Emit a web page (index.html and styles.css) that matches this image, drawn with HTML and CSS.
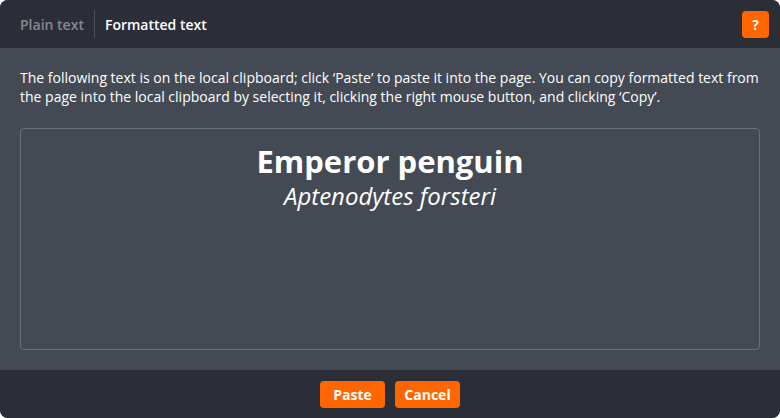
FILE: index.html
```html
<!DOCTYPE html>
<html>
<head>
<meta charset="utf-8">
<link rel="stylesheet" href="styles.css">
</head>
<body>
<div class="dialog">
  <div class="header">
    <div class="tabs">
      <span class="tab tab-inactive">Plain text</span>
      <span class="tab-sep"></span>
      <span class="tab tab-active">Formatted text</span>
    </div>
    <button class="help">?</button>
  </div>
  <div class="body">
    <p class="intro">The following text is on the local clipboard; click ‘Paste’ to paste it into the page. You can copy formatted text from the page into the local clipboard by selecting it, clicking the right mouse button, and clicking ‘Copy’.</p>
    <div class="clip">
      <div class="clip-title">Emperor penguin</div>
      <div class="clip-sub">Aptenodytes forsteri</div>
    </div>
  </div>
  <div class="footer">
    <button class="btn">Paste</button>
    <button class="btn">Cancel</button>
  </div>
</div>
</body>
</html>
```
FILE: styles.css
```css
html, body {
  margin: 0;
  padding: 0;
  background: #ffffff;
}
body {
  font-family: "Open Sans", "Noto Sans", sans-serif;
}
.dialog {
  width: 780px;
  height: 418px;
  display: flex;
  flex-direction: column;
  border-radius: 8px;
  overflow: hidden;
  background: #434a53;
}
.header {
  height: 48px;
  flex: none;
  background: #2b2e37;
  display: flex;
  align-items: center;
  justify-content: space-between;
  padding: 0 11px 0 20px;
}
.tabs {
  display: flex;
  align-items: center;
  height: 100%;
}
.tab {
  font-size: 14px;
  font-weight: 600;
}
.tab-inactive {
  color: #868990;
}
.tab-active {
  color: #ffffff;
}
.tab-sep {
  width: 1px;
  height: 28px;
  background: #4d525b;
  margin: 0 10px;
}
.help {
  width: 27px;
  height: 27px;
  border: none;
  border-radius: 4px;
  background: #ff6600;
  color: #ffffff;
  font-family: inherit;
  font-weight: 700;
  font-size: 14px;
  padding: 0;
  margin-top: 1px;
}
.body {
  flex: 1;
  padding: 0 20px 20px;
  display: flex;
  flex-direction: column;
}
.intro {
  margin: 20px 0 22px;
  color: #ffffff;
  font-size: 14px;
  line-height: 19px;
}
.clip {
  flex: 1;
  border: 1px solid #69707a;
  border-radius: 4px;
  text-align: center;
  color: #ffffff;
  padding-top: 13px;
}
.clip-title {
  font-size: 31px;
  font-weight: 700;
  line-height: 38px;
}
.clip-sub {
  font-size: 24px;
  font-style: italic;
  line-height: 31px;
}
.footer {
  height: 48px;
  flex: none;
  background: #2b2e37;
  display: flex;
  justify-content: center;
  align-items: center;
  gap: 10px;
}
.btn {
  height: 27px;
  min-width: 65px;
  padding: 0 9px;
  border: none;
  border-radius: 4px;
  background: #ff6600;
  color: #ffffff;
  font-family: inherit;
  font-weight: 700;
  font-size: 14px;
}
```
